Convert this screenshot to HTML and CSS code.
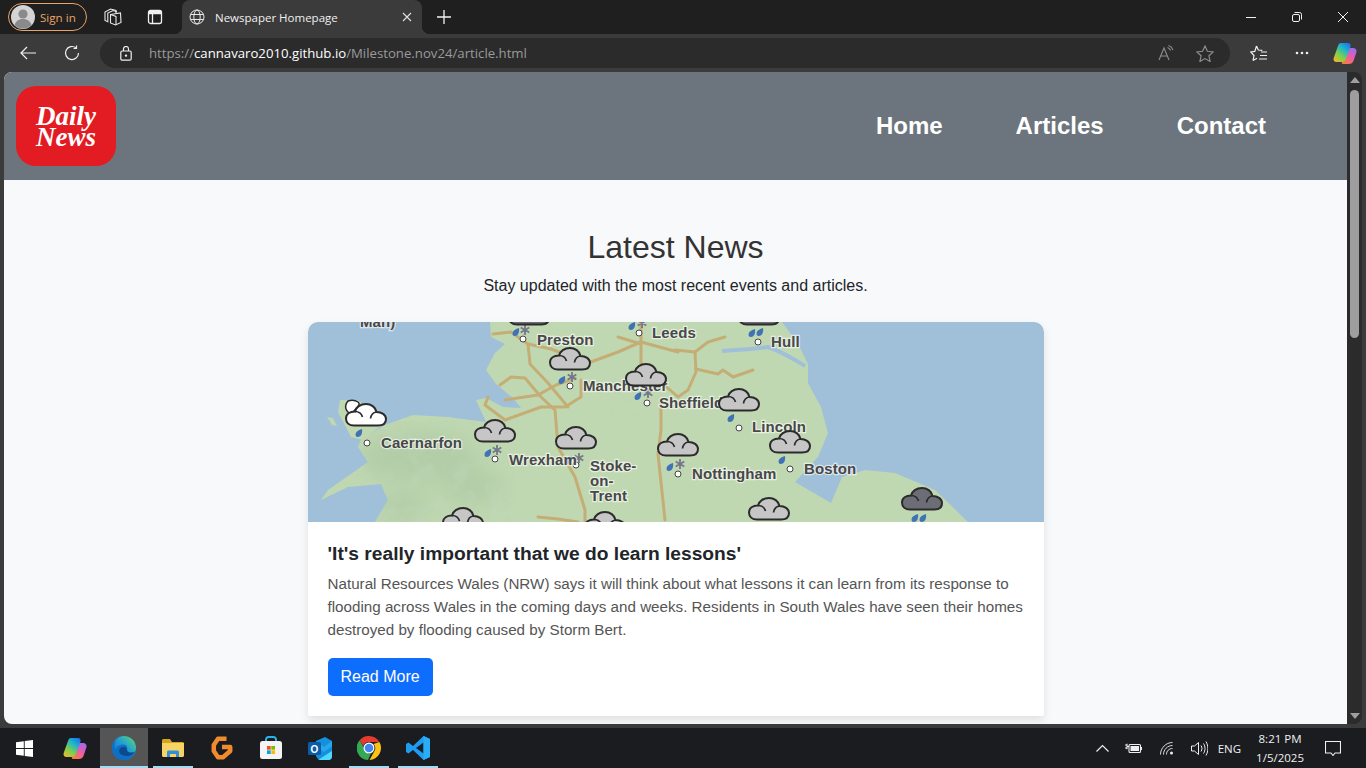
FILE: index.html
```html
<!DOCTYPE html>
<html lang="en">
<head>
    <meta charset="UTF-8">
    <meta name="viewport" content="width=device-width, initial-scale=1.0">
    <title>Newspaper Homepage</title>
    <link rel="stylesheet" href="styles.css">
</head>
<body>
    <!-- tab strip -->
    <div class="tabstrip">
        <div class="signin">
            <svg class="avatar" viewBox="0 0 24 24"><circle cx="12" cy="12" r="12" fill="#d4d4d4"/><circle cx="12" cy="9" r="4.6" fill="#8a8a8a"/><path d="M3.5 20c1.5-4.5 5-6 8.500-6s7 1.500 8.500 6a12 12 0 0 1-17 0z" fill="#8a8a8a"/></svg>
            <span>Sign in</span>
        </div>
        <button class="chrome-btn strip-one">
            <svg width="18" height="18" viewBox="0 0 18 18" fill="none" stroke="#e8e8e8" stroke-width="1.1"><path d="M6.500 6.500L16.500 5l.5 9.500-5.500 2.500-5-2z"/><path d="M6.500 6.500l5.500 2v8.500"/><path d="M4.500 14L1 12.500V4l5.500-3 5.500 1.500v3"/><path d="M3.800 13V5l5.200-2.500 4 1.200"/></svg>
        </button>
        <button class="chrome-btn strip-two">
            <svg width="16" height="16" viewBox="0 0 16 16" fill="none" stroke="#f0f0f0" stroke-width="1.300"><rect x="1.500" y="1.500" width="13" height="13" rx="2"/><path d="M1.500 3.500h13" stroke-width="3.500"/><path d="M5.500 5v9.500"/></svg>
        </button>
        <div class="tab">
            <svg width="16" height="16" viewBox="0 0 16 16" fill="none" stroke="#e8e8e8" stroke-width="1"><circle cx="8" cy="8" r="7"/><ellipse cx="8" cy="8" rx="3.200" ry="7"/><path d="M1.500 5.500h13M1.500 10.500h13"/></svg>
            <span class="tab-title">Newspaper Homepage</span>
            <svg class="tab-close" width="10" height="10" viewBox="0 0 10 10" stroke="#e0e0e0" stroke-width="1.100"><path d="M1 1l8 8M9 1l-8 8"/></svg>
        </div>
        <svg class="newtab" width="14" height="14" viewBox="0 0 14 14" stroke="#f2f2f2" stroke-width="1.300"><path d="M7 0v14M0 7h14"/></svg>
        <div class="window-btns">
            <svg width="10" height="10" viewBox="0 0 10 10" stroke="#f0f0f0" stroke-width="1"><path d="M0 5.500h10"/></svg>
            <svg width="10" height="10" viewBox="0 0 10 10" fill="none" stroke="#f0f0f0" stroke-width="1"><rect x=".5" y="2.500" width="7" height="7" rx="1.500"/><path d="M2.500 .5h5a2 2 0 0 1 2 2v5"/></svg>
            <svg width="10" height="10" viewBox="0 0 10 10" stroke="#f0f0f0" stroke-width="1"><path d="M0 0l10 10M10 0L0 10"/></svg>
        </div>
    </div>

    <!-- address bar row -->
    <div class="toolbar">
        <svg class="back" width="16" height="14" viewBox="0 0 16 14" fill="none" stroke="#f0f0f0" stroke-width="1.200"><path d="M16 7H1M7 1L1 7l6 6"/></svg>
        <svg class="reload" width="16" height="16" viewBox="0 0 16 16" fill="none" stroke="#f0f0f0" stroke-width="1.200"><path d="M14.500 8A6.500 6.500 0 1 1 12 2.900"/><path d="M12.500 .5v3h-3"/></svg>
        <div class="addressbar">
            <svg class="lock" width="12" height="15" viewBox="0 0 12 15" fill="none" stroke="#f0f0f0" stroke-width="1.200"><rect x=".8" y="5" width="10.400" height="9.200" rx="1.500"/><path d="M3.500 5V3a2.500 2.500 0 0 1 5 0v2"/><circle cx="6" cy="9.600" r=".6" fill="#f0f0f0"/></svg>
            <span class="url"><span class="url-dim">https://</span><span class="url-host">cannavaro2010.github.io</span><span class="url-dim">/Milestone.nov24/article.html</span></span>
            <svg class="read-aloud" width="16" height="16" viewBox="0 0 16 16" fill="none" stroke="#8d8d8d" stroke-width="1.100"><path d="M1 15L6 3l5 12M2.800 11h6.400M9.500 2.500c1.600.5 2.500 1.500 3 3M10.500 .5c2.200.7 3.700 2.200 4.500 4.500"/></svg>
            <svg class="star" width="18" height="17" viewBox="0 0 18 17" fill="none" stroke="#8d8d8d" stroke-width="1.200"><path d="M9 1l2.400 5.300 5.800.6-4.300 3.900 1.200 5.700L9 13.600l-5.100 2.900 1.200-5.700L.8 6.900l5.800-.6z"/></svg>
        </div>
        <svg class="favs" width="18" height="17" viewBox="0 0 18 17" fill="none" stroke="#f0f0f0" stroke-width="1.200"><path d="M6.500 1l1.800 4 4 .4M3 15.500l1-5L.8 7l4-.6L6.500 1M3 15.500l4-2.200M11 7h6M10 10.500h7M9 14h8"/></svg>
        <svg class="more" width="14" height="4" viewBox="0 0 14 4" fill="#f0f0f0"><circle cx="2" cy="2" r="1.300"/><circle cx="7" cy="2" r="1.300"/><circle cx="12" cy="2" r="1.300"/></svg>
        <svg class="copilot" width="24" height="23" viewBox="0 0 24 23">
            <defs>
                <linearGradient id="copA" x1="0.1" y1="1" x2="0.8" y2="0"><stop offset="0" stop-color="#f7b52c"/><stop offset=".35" stop-color="#7ed04a"/><stop offset=".7" stop-color="#1fb6c8"/><stop offset="1" stop-color="#1a78f0"/></linearGradient>
                <linearGradient id="copB" x1="0.2" y1="1" x2="0.8" y2="0"><stop offset="0" stop-color="#f5803c"/><stop offset=".5" stop-color="#ee5aa8"/><stop offset="1" stop-color="#9a6cf0"/></linearGradient>
            </defs>
            <path d="M14 6h6c2.500 0 4 1.700 3.500 4l-3 9c-.7 2-2.500 3-4.500 3h-6c-1 0-1.500-.8-1-2l3-11.500C12.500 7 13 6 14 6z" fill="url(#copB)"/>
            <path d="M8 1h7c2 0 3 1.500 2.500 3.500L13 17c-.8 2-2.500 3-4.500 3h-5C1.200 20 0 18 .7 16L5 4c.6-2 1.500-3 3-3z" fill="url(#copA)"/>
        </svg>
    </div>

    <!-- browser viewport -->
    <div class="viewport">
        <div class="page">
            <header class="site-header">
                <div class="logo">Daily News</div>
                <nav class="site-nav">
                    <a href="#">Home</a>
                    <a href="#">Articles</a>
                    <a href="#">Contact</a>
                </nav>
            </header>
            <main class="latest">
                <h1>Latest News</h1>
                <p class="lead">Stay updated with the most recent events and articles.</p>
                <article class="card">
                    <svg class="map" width="736" height="200" viewBox="0 0 736 200">
                        <defs>
                            <filter id="soft"><feGaussianBlur stdDeviation="0.5"/></filter>
                            <filter id="hill"><feGaussianBlur stdDeviation="10"/></filter>
                            <filter id="terrain" x="0" y="0" width="100%" height="100%">
                                <feTurbulence type="fractalNoise" baseFrequency="0.05" numOctaves="3" seed="4"/>
                                <feColorMatrix values="0 0 0 0 0.55  0 0 0 0 0.68  0 0 0 0 0.5  0 0 0 2.2 -1"/>
                            </filter>
                            <clipPath id="landclip"><path id="landshape" d="M182 0L183 15 197 22 187 31 178 48 188 62 205 76 213 86 195 85 178 76 168 78 178 100 140 95 105 93 77 103 53 118 50 125 60 140 20 168 13 178 40 165 73 162 80 178 67 200H660L627 168 587 151 557 148 534 155 523 181 487 160 510 135 520 111 513 85 500 61 500 42 490 22 474 0z"/></clipPath>
                            <symbol id="cloud" viewBox="0 0 42 24" overflow="visible">
                                <path d="M9 22.500C4 22.500 1 19.500 1 15.500 1 11 5 8.500 10 8.500 11 4 15.500 1 21 1 26 1 30.500 4 31.500 9 36.500 9 41 11.500 41 16 41 20 38 22.500 33 22.500z" stroke="#2b2b2b" stroke-width="2"/>
                                <path d="M10 8.500C14 8.500 16.500 10.500 17.500 14M31.500 9C28 9.500 26 12 25.500 15.500" fill="none" stroke="#2b2b2b" stroke-width="1.700"/>
                            </symbol>
                            <symbol id="drop" viewBox="0 0 8 9" overflow="visible">
                                <path d="M7 0C7.500 3 7 8 2.500 8 0 8 0 4 2 2.500 3.500 1.300 5 .5 7 0z" fill="#3f73b5"/>
                            </symbol>
                            <symbol id="snow" viewBox="0 0 10 10" overflow="visible">
                                <path d="M5 0v10M.7 2.500l8.600 5M9.300 2.500l-8.600 5" stroke="#77778a" stroke-width="1.800"/>
                            </symbol>
                        </defs>
                        <rect width="736" height="200" fill="#a0bfd8"/>
                        <g filter="url(#soft)">
                            <use href="#landshape" fill="#bfd8b1"/>
                            <path d="M32 78L50 78 62 88 78 100 55 118 43 115 30 90z" fill="#bfd8b1"/>
                            <path d="M19 95L25 96 29 104 24 103z" fill="#bfd8b1"/>
                            <path d="M414 29C430 28 445 27 460 25 475 30 487 38 497 44" fill="none" stroke="#a0bfd8" stroke-width="4"/>
                        </g>
                        <g clip-path="url(#landclip)">
                            <g filter="url(#hill)" fill="#b3cda8">
                                <ellipse cx="110" cy="135" rx="60" ry="26"/>
                                <ellipse cx="95" cy="185" rx="26" ry="16"/>
                                <ellipse cx="165" cy="165" rx="30" ry="18"/>
                            </g>
                            <rect x="40" y="95" width="170" height="105" filter="url(#terrain)" opacity="0.45"/>
                            <rect x="285" y="50" width="50" height="45" filter="url(#terrain)" opacity="0.3"/>
                        </g>
                        <g class="roads" filter="url(#soft)">
                            <path d="M185 12L203 10 220 22 243 27 280 41 310 30 333 20 370 30"/>
                            <path d="M220 22L222 42 240 61 260 85"/>
                            <path d="M192 63L203 55 217 56 233 75 247 88 250 125 267 155 277 188 277 200"/>
                            <path d="M197 78L230 73 248 63 267 56"/>
                            <path d="M180 75L177 83 197 98 233 85 257 85 273 75 273 58"/>
                            <path d="M310 15L333 22 333 48M333 0V22"/>
                            <path d="M353 78V108L350 132 357 198"/>
                            <path d="M367 28L387 30 400 20 417 15"/>
                            <path d="M387 30L388 50 380 68 370 75 353 60"/>
                            <path d="M388 47L410 52 415 48 425 55 445 48"/>
                            <path d="M230 195L250 197 270 200"/>
                        </g>
                        <g class="city-dots">
                            <circle cx="215" cy="17" r="3"/><circle cx="331" cy="11" r="3"/><circle cx="450" cy="20" r="3"/>
                            <circle cx="262" cy="64" r="3"/><circle cx="339" cy="81" r="3"/><circle cx="59" cy="121" r="3"/>
                            <circle cx="187" cy="137" r="3"/><circle cx="268" cy="143" r="3"/><circle cx="370" cy="152" r="3"/>
                            <circle cx="431" cy="106" r="3"/><circle cx="482" cy="147" r="3"/>
                        </g>
                        <use href="#drop" x="204" y="6" width="8" height="9"/><use href="#snow" x="212" y="3" width="10" height="10"/>
                        <use href="#drop" x="320" y="0" width="8" height="9"/><use href="#snow" x="329" y="-4" width="10" height="10"/>
                        <use href="#drop" x="440" y="7" width="8" height="9"/><use href="#drop" x="448" y="6" width="8" height="9"/>
                        <use href="#drop" x="250" y="54" width="8" height="9"/><use href="#snow" x="259" y="50" width="10" height="10"/>
                        <use href="#drop" x="326" y="70" width="8" height="9"/><use href="#snow" x="335" y="66" width="10" height="10"/>
                        <use href="#drop" x="47" y="107" width="8" height="9"/>
                        <use href="#drop" x="176" y="127" width="8" height="9"/><use href="#snow" x="184" y="123" width="10" height="10"/>
                        <use href="#drop" x="257" y="134" width="8" height="9"/><use href="#snow" x="266" y="131" width="10" height="10"/>
                        <use href="#drop" x="358" y="141" width="8" height="9"/><use href="#snow" x="367" y="137" width="10" height="10"/>
                        <use href="#drop" x="419" y="92" width="8" height="9"/>
                        <use href="#drop" x="470" y="134" width="8" height="9"/>
                        <use href="#drop" x="603" y="192" width="8" height="9"/><use href="#drop" x="611" y="192" width="8" height="9"/>
                        <g class="labels">
                            <text x="52" y="5">Man)</text>
                            <text x="229" y="23">Preston</text>
                            <text x="344" y="16">Leeds</text>
                            <text x="463" y="25">Hull</text>
                            <text x="275" y="69">Manchester</text>
                            <text x="351" y="86">Sheffield</text>
                            <text x="444" y="110">Lincoln</text>
                            <text x="73" y="126">Caernarfon</text>
                            <text x="201" y="143">Wrexham</text>
                            <text x="282" y="149">Stoke-</text>
                            <text x="282" y="164">on-</text>
                            <text x="282" y="179">Trent</text>
                            <text x="384" y="157">Nottingham</text>
                            <text x="496" y="152">Boston</text>
                        </g>
                        <g fill="#c6c6c6">
                            <use href="#cloud" x="241" y="25" width="42" height="24"/>
                            <use href="#cloud" x="317" y="41" width="42" height="24"/>
                            <use href="#cloud" x="166" y="97" width="42" height="24"/>
                            <use href="#cloud" x="247" y="104" width="42" height="24"/>
                            <use href="#cloud" x="349" y="111" width="42" height="24"/>
                            <use href="#cloud" x="134" y="185" width="42" height="24"/>
                            <use href="#cloud" x="276" y="189" width="42" height="24"/>
                            <use href="#cloud" x="410" y="66" width="42" height="24"/>
                            <use href="#cloud" x="461" y="108" width="42" height="24"/>
                            <use href="#cloud" x="440" y="175" width="42" height="24"/>
                        </g>
                        <path d="M40 79C36 84 37 90 44 92 47 86 54 83 50 80 47 78 43 78 40 79z" fill="#fff" stroke="#2b2b2b" stroke-width="1.500"/>
                        <use href="#cloud" x="37" y="81" width="42" height="24" fill="#ffffff"/>
                        <g fill="#6d6d78">
                            <use href="#cloud" x="593" y="165" width="42" height="24"/>
                            <use href="#cloud" x="430" y="-20" width="42" height="24"/>
                            <use href="#cloud" x="200" y="-20" width="42" height="24"/>
                        </g>
                    </svg>
                    <div class="card-body">
                        <h2>'It's really important that we do learn lessons'</h2>
                        <p>Natural Resources Wales (NRW) says it will think about what lessons it can learn from its response to flooding across Wales in the coming days and weeks. Residents in South Wales have seen their homes destroyed by flooding caused by Storm Bert.</p>
                        <a class="read-more" href="#">Read More</a>
                    </div>
                </article>
            </main>
        </div>
        <div class="scrollbar">
            <div class="arrow-up"></div>
            <div class="thumb"></div>
            <div class="arrow-down"></div>
        </div>
    </div>

    <!-- windows taskbar -->
    <div class="taskbar">
        <div class="task task-start">
            <svg width="17" height="17" viewBox="0 0 17 17" fill="#fff"><path d="M0 2.300L7.800 1.200v6.800H0zM8.700 1L17 0v8H8.700zM0 9h7.800v6.800L0 14.700zM8.700 9H17v8l-8.300-1.100z"/></svg>
        </div>
        <div class="task">
            <svg width="24" height="23" viewBox="0 0 24 23">
                <path d="M14 6h6c2.500 0 4 1.700 3.500 4l-3 9c-.7 2-2.500 3-4.500 3h-6c-1 0-1.500-.8-1-2l3-11.500C12.500 7 13 6 14 6z" fill="url(#copB)"/>
                <path d="M8 1h7c2 0 3 1.500 2.500 3.500L13 17c-.8 2-2.500 3-4.500 3h-5C1.200 20 0 18 .7 16L5 4c.6-2 1.500-3 3-3z" fill="url(#copA)"/>
            </svg>
        </div>
        <div class="task task-active open">
            <svg width="24" height="24" viewBox="0 0 24 24">
                <defs><linearGradient id="edgeA" x1="0" y1="1" x2="1" y2="0"><stop offset="0" stop-color="#0c62b4"/><stop offset=".55" stop-color="#1f9ed8"/><stop offset="1" stop-color="#5fdc6a"/></linearGradient></defs>
                <circle cx="12" cy="12" r="12" fill="url(#edgeA)"/>
                <path d="M24 12.500c0 3-3 4.500-6 4-2-.3-3-1.500-3-3 1-3-1-5-4-5-4 0-7.500 3-8 6C2.500 9 2 5 6 2 3 3.500.5 7 0 12c-.5 6 4 11 10 12 2 .3 4 .2 6-.7 3-1.300 5-3 6.500-5.300" fill="#0e6fc6"/>
                <path d="M7 15c.5-3 3-4.500 5.500-4 1.500.3 2.500 1.500 2.500 3 0 2.500 4 3.500 7 2-1.500 3-4.500 4.500-7.500 4C10 19.500 7 18 7 15z" fill="#0d4a8c"/>
            </svg>
        </div>
        <div class="task open">
            <svg width="22" height="18" viewBox="0 0 22 18"><path d="M0 1.500C0 .7.700 0 1.500 0H8l2 3h10.500c.8 0 1.500.7 1.500 1.500V7H0z" fill="#d9a21c"/><path d="M0 4h22v12.500c0 .8-.7 1.500-1.500 1.500h-19C.7 18 0 17.300 0 16.500z" fill="#f6d365"/><path d="M5 18v-5c0-.8.700-1.500 1.500-1.500h9c.8 0 1.500.7 1.500 1.500v5h-3v-3H8v3z" fill="#2f8fd8"/></svg>
        </div>
        <div class="task">
            <svg width="22" height="24" viewBox="0 0 22 24" fill="none" stroke="#f08c2e" stroke-width="4.500" stroke-linejoin="round"><path d="M15.500 2.800L7 2.800 2.800 9v6L7 21.200h5L19.200 15V11H11"/></svg>
        </div>
        <div class="task">
            <svg width="24" height="24" viewBox="0 0 24 24"><path d="M7 6V3.500A2.500 2.500 0 0 1 9.500 1h5A2.500 2.500 0 0 1 17 3.500V6" fill="none" stroke="#25b4e8" stroke-width="2"/><rect x="1" y="5" width="22" height="18" rx="2.500" fill="#f4f4f4"/><rect x="8" y="10" width="3.700" height="3.700" fill="#f25022"/><rect x="12.300" y="10" width="3.700" height="3.700" fill="#7fba00"/><rect x="8" y="14.300" width="3.700" height="3.700" fill="#00a4ef"/><rect x="12.300" y="14.300" width="3.700" height="3.700" fill="#ffb900"/></svg>
        </div>
        <div class="task">
            <svg width="24" height="24" viewBox="0 0 24 24"><path d="M8 5L17 1l7 4v15l-3 3H10l-2-3z" fill="#1490df"/><path d="M8 5l8 6 8-6v5l-8 6-8-5z" fill="#28a8ea"/><path d="M10 24l14-9v6c0 1.500-1.500 3-3 3z" fill="#50d9ff"/><rect x="0" y="6" width="13" height="13" rx="1.500" fill="#0a5ca8"/><text class="outlook-o" x="6.500" y="16.500">O</text></svg>
        </div>
        <div class="task open">
            <svg width="24" height="24" viewBox="0 0 24 24"><path d="M12 0a12 12 0 0 1 10.400 6H12a6 6 0 0 0-5.700 4.100L2.600 4.200A12 12 0 0 1 12 0z" fill="#e33b2e"/><path d="M22.400 6A12 12 0 0 1 12.500 24l4.700-8.600A6 6 0 0 0 16.500 8z" fill="#fbc116"/><path d="M2.600 4.200l4.800 8.400A6 6 0 0 0 14 17.600L11 24A12 12 0 0 1 2.600 4.200z" fill="#34a853"/><circle cx="12" cy="12" r="5.500" fill="#fff"/><circle cx="12" cy="12" r="4.300" fill="#4285f4"/></svg>
        </div>
        <div class="task open">
            <svg width="24" height="24" viewBox="0 0 24 24"><path d="M17.500 0L24 3v18l-6.500 3L7 14l-4.500 3.500L0 16V8l2.500-1.500L7 10z" fill="#1f9cf0"/><path d="M17.500 6.500L10 12l7.500 5.500z" fill="#14202c"/><path d="M17.500 0L24 3v18l-6.500 3z" fill="#28aef5"/></svg>
        </div>
        <div class="tray">
            <svg class="tray-chevron" width="13" height="8" viewBox="0 0 13 8" fill="none" stroke="#eee" stroke-width="1.200"><path d="M.5 7.500l6-6 6 6"/></svg>
            <svg class="tray-battery" width="17" height="11" viewBox="0 0 17 11" fill="none" stroke="#eee" stroke-width="1.100"><path d="M0 2h2M0 5h2M2 .8v5.400M2 3.500h2"/><rect x="4" y="1.500" width="11.500" height="8" rx="1"/><rect x="5.500" y="3" width="8.500" height="5" fill="#eee" stroke="none"/><path d="M16.500 4v3"/></svg>
            <svg class="tray-wifi" width="14" height="13" viewBox="0 0 14 13" fill="none" stroke="#ddd" stroke-width="1"><path d="M.5 12.500C.5 6 6 .5 12.500 .5M3.500 12.500c0-5 4-9 9-9M6.500 12.500c0-3.500 2.500-6 6-6"/><circle cx="11.500" cy="11" r="1.500" fill="#eee" stroke="none"/></svg>
            <svg class="tray-sound" width="17" height="15" viewBox="0 0 17 15" fill="none" stroke="#eee" stroke-width="1"><path d="M.5 5v5h3L7.500 13.500v-12L3.500 5zM10 4.500c1.300 2 1.300 4 0 6M12.500 2.500c2 3 2 7 0 10M15 .5c2.500 4.500 2.500 9.500 0 14"/></svg>
            <span class="tray-lang">ENG</span>
            <div class="clock"><span>8:21 PM</span><span>1/5/2025</span></div>
            <svg class="tray-notify" width="16" height="15" viewBox="0 0 16 15" fill="none" stroke="#f0f0f0" stroke-width="1.100"><path d="M.5 .5h15v11.500H10l-2 2.500-2-2.500H.5z"/></svg>
        </div>
    </div>
</body>
</html>
```

FILE: styles.css
```css
* {
    margin: 0;
    padding: 0;
    box-sizing: border-box;
}
html, body {
    height: 768px;
    overflow: hidden;
}
body {
    display: flex;
    flex-direction: column;
    background-color: #3b3b3b;
    font-family: "Liberation Sans", Arial, sans-serif;
}

/* browser chrome */
.tabstrip {
    height: 34px;
    flex: none;
    display: flex;
    align-items: center;
    background-color: #1f1f1f;
    padding-left: 8px;
}
.signin {
    width: 79px;
    height: 28px;
    display: flex;
    align-items: center;
    gap: 5px;
    padding-left: 2px;
    border: 1px solid #e8a469;
    border-radius: 14px;
    color: #e8a469;
    font: 11.6px "Open Sans", sans-serif;
}
.avatar {
    width: 24px;
    height: 24px;
    flex: none;
}
.chrome-btn {
    width: 18px;
    height: 18px;
    background: none;
    border: none;
    display: flex;
    align-items: center;
    justify-content: center;
}
.strip-one {
    margin-left: 17px;
}
.strip-two {
    margin-left: 24px;
}
.tab {
    width: 240px;
    height: 34px;
    margin-left: 18px;
    padding: 0 10px 0 7px;
    display: flex;
    align-items: center;
    position: relative;
    background-color: #3b3b3b;
    border-radius: 8px 8px 0 0;
    color: #f0f0f0;
    font: 11.5px "Open Sans", sans-serif;
}
/* small flares where the tab meets the toolbar */
.tab::before,
.tab::after {
    content: "";
    position: absolute;
    bottom: 0;
    width: 8px;
    height: 8px;
}
.tab::before {
    left: -8px;
    background: radial-gradient(circle at 0 0, #1f1f1f 8px, #3b3b3b 8.5px);
}
.tab::after {
    right: -8px;
    background: radial-gradient(circle at 100% 0, #1f1f1f 8px, #3b3b3b 8.5px);
}
.tab-title {
    margin-left: 10px;
    flex: 1;
}
.newtab {
    margin-left: 15px;
}
.window-btns {
    margin-left: auto;
    display: flex;
    gap: 36px;
    padding-right: 18px;
}
.toolbar {
    height: 34px;
    flex: none;
    display: flex;
    align-items: center;
    background-color: #3b3b3b;
    padding: 4px 0 0 20px;
}
.reload {
    margin-left: 28px;
}
.addressbar {
    width: 1130px;
    height: 30px;
    margin-left: 20px;
    display: flex;
    align-items: center;
    padding-left: 20px;
    background-color: #2b2b2b;
    border-radius: 15px;
}
.url {
    margin-left: 17px;
    font: 13.2px "Open Sans", sans-serif;
    white-space: nowrap;
}
.url-dim {
    color: #9a9a9a;
}
.url-host {
    color: #ffffff;
}
.read-aloud {
    margin-left: auto;
}
.star {
    margin: 0 16px 0 22px;
}
.favs {
    margin-left: 20px;
}
.more {
    margin-left: 27px;
}
.copilot {
    margin-left: 24px;
}

/* page area */
.viewport {
    flex: 1;
    display: flex;
    padding: 4px;
    min-height: 0;
}
.page {
    width: 1343px;
    overflow: hidden;
    background-color: #f8f9fa;
    border-radius: 8px 0 0 8px;
}
.site-header {
    height: 108px;
    display: flex;
    align-items: center;
    justify-content: space-between;
    padding: 0 81px 0 12px;
    background-color: #6c757d;
}
.logo {
    width: 100px;
    height: 80px;
    padding: 20px 15px 0;
    text-align: center;
    background-color: #e31b23;
    border-radius: 20px;
    color: #ffffff;
    font: italic bold 27px/21px "Liberation Serif", serif;
}
.site-nav {
    display: flex;
    gap: 73px;
}
.site-nav a {
    color: #ffffff;
    font-size: 24px;
    font-weight: bold;
    text-decoration: none;
}
.latest {
    padding-top: 48px;
    text-align: center;
}
h1 {
    font-size: 32px;
    font-weight: 400;
    line-height: 1.2;
    color: #333333;
    margin-bottom: 8px;
}
.lead {
    font-size: 16px;
    line-height: 24px;
    color: #212529;
    margin-bottom: 24px;
}
.card {
    width: 736px;
    margin: 0 auto;
    text-align: left;
    background-color: #ffffff;
    border-radius: 10px 10px 2px 2px;
    overflow: hidden;
    box-shadow: 0 4px 8px rgba(0, 0, 0, 0.1);
}
.map {
    display: block;
}
.roads path {
    fill: none;
    stroke: #c4ae74;
    stroke-width: 3;
    stroke-linejoin: round;
    stroke-linecap: round;
}
.city-dots circle {
    fill: #ffffff;
    stroke: #444444;
    stroke-width: 1;
}
.labels text {
    font: bold 15px "Liberation Sans", sans-serif;
    letter-spacing: 0.1px;
    fill: #484848;
    stroke: #ffffff;
    stroke-width: 2.5px;
    stroke-opacity: 0.6;
    paint-order: stroke;
}
.card-body {
    padding: 20px;
}
h2 {
    font-size: 19.2px;
    line-height: 23px;
    font-weight: bold;
    color: #212529;
    margin-bottom: 8px;
}
.card-body p {
    font-size: 15.2px;
    line-height: 22.8px;
    color: #555555;
    margin-bottom: 16px;
}
.read-more {
    display: inline-block;
    height: 38px;
    padding: 0 13px;
    line-height: 38px;
    font-size: 16px;
    color: #ffffff;
    text-decoration: none;
    background-color: #0d6efd;
    border-radius: 5px;
}

/* scrollbar */
.scrollbar {
    width: 15px;
    display: flex;
    flex-direction: column;
    align-items: center;
    background-color: #2b2b2b;
    border-radius: 0 8px 8px 0;
    padding: 5px 0;
}
.arrow-up {
    border-left: 5px solid transparent;
    border-right: 5px solid transparent;
    border-bottom: 6px solid #9e9e9e;
}
.arrow-down {
    margin-top: auto;
    border-left: 5px solid transparent;
    border-right: 5px solid transparent;
    border-top: 6px solid #9e9e9e;
}
.thumb {
    width: 9px;
    height: 248px;
    margin-top: 7px;
    background-color: #9e9e9e;
    border-radius: 5px;
}

/* taskbar */
.taskbar {
    height: 40px;
    flex: none;
    display: flex;
    align-items: stretch;
    background-color: #1b1c20;
}
.task {
    width: 48px;
    margin-right: 1px;
    display: flex;
    align-items: center;
    justify-content: center;
    position: relative;
}
.task-start {
    width: 48px;
    margin-right: 3px;
}
.task-active {
    background-color: #555555;
}
.open::after {
    content: "";
    position: absolute;
    left: 4px;
    right: 4px;
    bottom: 0;
    height: 2px;
    background-color: #9fdcf5;
}
.task-active::after {
    left: 0;
    right: 0;
}
.outlook-o {
    font: bold 10px "Liberation Sans", sans-serif;
    fill: #ffffff;
    text-anchor: middle;
}
.tray {
    margin-left: auto;
    display: flex;
    align-items: center;
    color: #f0f0f0;
    font: 11.5px "Open Sans", sans-serif;
    padding-right: 25px;
}
.tray-battery {
    margin-left: 16px;
}
.tray-wifi {
    margin-left: 18px;
}
.tray-sound {
    margin-left: 17px;
}
.tray-lang {
    margin-left: 10px;
}
.clock {
    margin-left: 15px;
    display: flex;
    flex-direction: column;
    align-items: center;
    line-height: 19px;
}
.tray-notify {
    margin-left: 21px;
}
```
